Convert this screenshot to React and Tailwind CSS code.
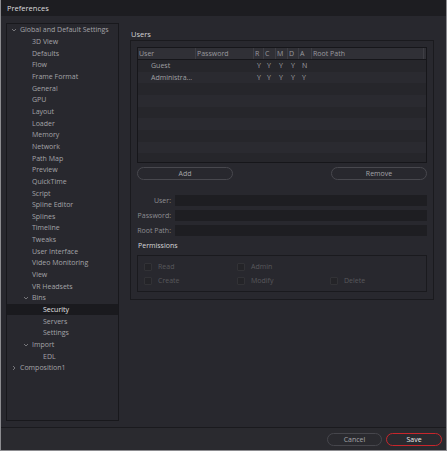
import React from 'react';

const tree = [
  { label: 'Global and Default Settings', level: 0, chevron: 'down' },
  { label: '3D View', level: 1 },
  { label: 'Defaults', level: 1 },
  { label: 'Flow', level: 1 },
  { label: 'Frame Format', level: 1 },
  { label: 'General', level: 1 },
  { label: 'GPU', level: 1 },
  { label: 'Layout', level: 1 },
  { label: 'Loader', level: 1 },
  { label: 'Memory', level: 1 },
  { label: 'Network', level: 1 },
  { label: 'Path Map', level: 1 },
  { label: 'Preview', level: 1 },
  { label: 'QuickTime', level: 1 },
  { label: 'Script', level: 1 },
  { label: 'Spline Editor', level: 1 },
  { label: 'Splines', level: 1 },
  { label: 'Timeline', level: 1 },
  { label: 'Tweaks', level: 1 },
  { label: 'User Interface', level: 1 },
  { label: 'Video Monitoring', level: 1 },
  { label: 'View', level: 1 },
  { label: 'VR Headsets', level: 1 },
  { label: 'Bins', level: 1, chevron: 'down' },
  { label: 'Security', level: 2, selected: true },
  { label: 'Servers', level: 2 },
  { label: 'Settings', level: 2 },
  { label: 'Import', level: 1, chevron: 'down' },
  { label: 'EDL', level: 2 },
  { label: 'Composition1', level: 0, chevron: 'right' },
];

const users = [
  { name: 'Guest', perms: ['Y', 'Y', 'Y', 'Y', 'N'] },
  { name: 'Administra...', perms: ['Y', 'Y', 'Y', 'Y', 'Y'] },
];

const Chevron = ({ dir }) => (
  <svg width="6" height="6" viewBox="0 0 6 6" className="shrink-0">
    {dir === 'down' ? (
      <path d="M1 2 L3 4 L5 2" fill="none" stroke="#8a8a8e" strokeWidth="0.8" />
    ) : (
      <path d="M2 1 L4 3 L2 5" fill="none" stroke="#8a8a8e" strokeWidth="0.8" />
    )}
  </svg>
);

const TreeRow = ({ item }) => {
  // text lands at x 20 / 32 / 43 for levels 0 / 1 / 2
  const pad = item.level === 0 ? 'pl-[4px]' : item.level === 1 ? 'pl-[16px]' : 'pl-[27px]';
  return (
    <div
      className={`h-[11.66px] flex items-center ${pad} ${
        item.selected ? 'bg-[#1a1a1e] text-[#e4e4e6]' : 'text-[#a4a4a8]'
      }`}
    >
      <span className="w-[9px] flex items-center">
        {item.chevron && <Chevron dir={item.chevron} />}
      </span>
      <span className="whitespace-nowrap">{item.label}</span>
    </div>
  );
};

const cols = [
  { label: 'User', w: 'w-[58px]' },
  { label: 'Password', w: 'w-[58px]' },
  { label: 'R', w: 'w-[10px]' },
  { label: 'C', w: 'w-[12px]' },
  { label: 'M', w: 'w-[12px]' },
  { label: 'D', w: 'w-[11px]' },
  { label: 'A', w: 'w-[13px]' },
  { label: 'Root Path', w: 'w-[112px]' },
];

const Checkbox = ({ label }) => (
  <div className="flex items-center gap-[6px] w-[93px] h-[11px]">
    <span className="w-[8px] h-[8px] bg-[#242428] border border-[#323236] rounded-[1px]" />
    <span className="text-[#58585c]">{label}</span>
  </div>
);

const Field = ({ label }) => (
  <div className="flex items-center gap-[4px] h-[11px]">
    <span className="w-[34px] text-right text-[#8e8e92] whitespace-nowrap">{label}</span>
    <div className="flex-1 h-[11px] bg-[#1e1e22]" />
  </div>
);

export default function App() {
  return (
    <div
      className="w-[447px] h-[451px] bg-[#28282e] flex flex-col border-x border-b border-[#8c8c90] text-[7px] leading-[11px] overflow-hidden"
      style={{ fontFamily: '"Open Sans", "Noto Sans", sans-serif' }}
    >
      <div className="h-[16px] shrink-0 bg-[#1d1d21] flex items-center pl-[6px] text-[7.5px] text-[#dcdcde]">
        Preferences
      </div>

      <div className="flex-1 flex pt-[7px] pl-[5px]">
        <div className="w-[113px] h-[398px] border border-[#18181c] overflow-hidden">
          {tree.map((item) => (
            <TreeRow key={item.label} item={item} />
          ))}
        </div>

        <div className="ml-[11px] w-[304px] pt-[6px] flex flex-col">
          <div className="h-[11px] pl-[1px] text-[7.5px] text-[#d4d4d6] flex items-center">Users</div>
          <div className="border border-[#1a1a1e] px-[6px] pt-[6px] pb-[7px] flex flex-col">
            <div className="h-[116px] border border-[#16161a] flex flex-col overflow-hidden">
              <div className="h-[12px] shrink-0 bg-[#303036] border-b border-[#16161a] flex text-[#9a9a9e]">
                {cols.map((c) => (
                  <div key={c.label} className={`${c.w} shrink-0 border-r border-[#3e3e44] pl-[1px] flex items-center whitespace-nowrap`}>
                    {c.label}
                  </div>
                ))}
              </div>
              {Array.from({ length: 9 }).map((_, i) => {
                const u = users[i];
                return (
                  <div
                    key={i}
                    className={`h-[11.66px] shrink-0 flex items-center text-[#a0a0a4] ${
                      i % 2 === 0 ? 'bg-[#26262b]' : 'bg-[#2a2a30]'
                    }`}
                  >
                    {u && (
                      <>
                        <div className="w-[58px] shrink-0 pl-[13px] whitespace-nowrap">{u.name}</div>
                        <div className="w-[58px] shrink-0" />
                        {u.perms.map((p, j) => (
                          <div key={j} className={`${cols[j + 2].w} shrink-0 pl-[3px]`}>
                            {p}
                          </div>
                        ))}
                      </>
                    )}
                  </div>
                );
              })}
            </div>

            <div className="flex justify-between mt-[4px] text-[#a4a4a8]">
              <div className="w-[96px] h-[13px] rounded-full border border-[#48484e] flex items-center justify-center">
                Add
              </div>
              <div className="w-[96px] h-[13px] rounded-full border border-[#48484e] flex items-center justify-center">
                Remove
              </div>
            </div>

            <div className="mt-[15px] flex flex-col gap-[4px]">
              <Field label="User:" />
              <Field label="Password:" />
              <Field label="Root Path:" />
            </div>

            <div className="mt-[4px] h-[11px] pl-[1px] flex items-center text-[#d8d8da]">Permissions</div>
            <div className="mt-[4px] h-[37px] border border-[#1a1a1e] pl-[6px] pt-[5px] flex flex-col gap-[3px]">
              <div className="flex">
                <Checkbox label="Read" />
                <Checkbox label="Admin" />
              </div>
              <div className="flex">
                <Checkbox label="Create" />
                <Checkbox label="Modify" />
                <Checkbox label="Delete" />
              </div>
            </div>
          </div>
        </div>
      </div>

      <div className="h-[23px] shrink-0 border-t border-[#1a1a1e] bg-[#2a2a2f] flex items-center justify-end gap-[4px] pr-[4px]">
        <div className="w-[55px] h-[13px] rounded-full border border-[#46464c] text-[#a4a4a8] flex items-center justify-center">
          Cancel
        </div>
        <div className="w-[56px] h-[13px] rounded-full border border-[#c8262c] text-[#ececee] flex items-center justify-center">
          Save
        </div>
      </div>
    </div>
  );
}
